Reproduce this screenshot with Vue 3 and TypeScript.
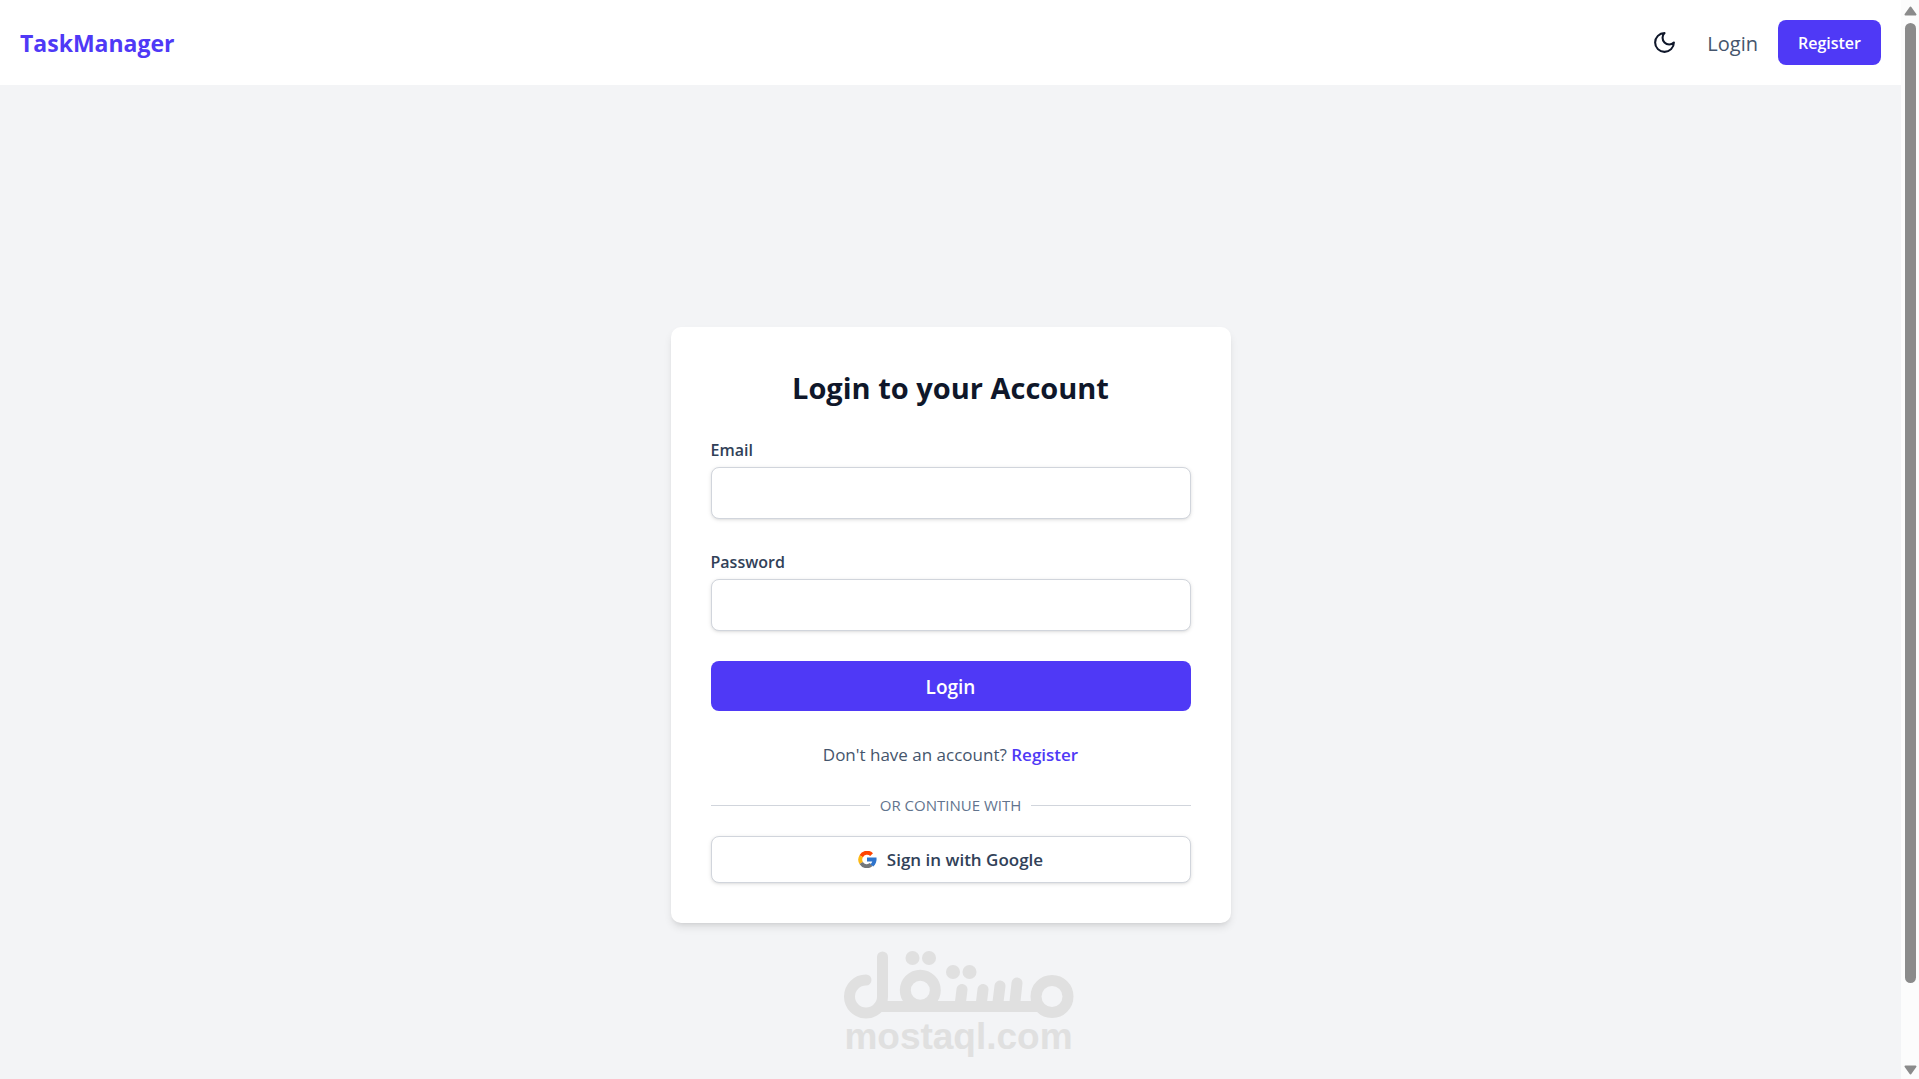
<script setup lang="ts">
import { ref } from 'vue'

const email = ref('')
const password = ref('')
</script>

<template>
  <div class="window">
    <div class="page">
      <header class="bar">
        <a class="brand" href="#">TaskManager</a>
        <nav class="nav">
          <button class="theme" type="button" aria-label="Toggle dark mode">
            <svg viewBox="0 0 24 24" width="25" height="25" fill="none" stroke="currentColor" stroke-width="2" stroke-linecap="round" stroke-linejoin="round" aria-hidden="true">
              <path d="M12 3a6 6 0 0 0 9 9 9 9 0 1 1-9-9Z" />
            </svg>
          </button>
          <a class="nav-link" href="#login">Login</a>
          <a class="nav-button" href="#register">Register</a>
        </nav>
      </header>

      <main class="main">
        <section class="card">
          <h1 class="title">Login to your Account</h1>
          <form class="form" @submit.prevent>
            <div class="field">
              <label for="email">Email</label>
              <input id="email" v-model="email" type="email" />
            </div>
            <div class="field">
              <label for="password">Password</label>
              <input id="password" v-model="password" type="password" />
            </div>
            <button class="submit" type="submit">Login</button>
          </form>
          <p class="signup">Don't have an account? <a href="#register">Register</a></p>
          <div class="divider"><span>OR CONTINUE WITH</span></div>
          <button class="google" type="button">
            <svg viewBox="0 0 19 17" width="19" height="17" fill="none" stroke-width="4" aria-hidden="true">
              <path stroke="#ff4500" d="M3.2 5.2A6.6 6.6 0 0 1 13.6 3.6" />
              <path stroke="#fdb913" d="M3.2 12A6.6 6.6 0 0 1 3.2 5.2" />
              <path stroke="#74777a" d="M13.2 13.6A6.6 6.6 0 0 1 3.2 12" />
              <path fill="#2f74cc" d="M9 6.500h9.500c.5 3.500-.8 7.100-3.200 9.100l-3-2.400c1-.6 1.700-1.500 2-2.600H9z" />
            </svg>
            <span>Sign in with Google</span>
          </button>
        </section>
      </main>

      <div class="watermark">
        <svg viewBox="0 0 230 68" width="230" height="68" fill="none" stroke="currentColor" stroke-width="11" stroke-linecap="round" aria-hidden="true">
          <path d="M22 29A16.500 16.500 0 1 0 38.500 45.500V6" />
          <path d="M36 55.500H198" stroke-linecap="butt" />
          <circle cx="76.300" cy="39.300" r="15" />
          <circle cx="208" cy="45.500" r="16" />
          <path d="M116 55l2-16.500M137 55l2-16.500M153.500 55l2.500-20M170.500 55l2.500-23" />
          <g fill="currentColor" stroke="none">
            <circle cx="68.500" cy="7" r="7" />
            <circle cx="85" cy="7" r="7" />
            <circle cx="109" cy="21" r="7" />
            <circle cx="125.500" cy="21" r="7" />
          </g>
        </svg>
        <span>mostaql.com</span>
      </div>
    </div>

    <div class="scrollbar" aria-hidden="true">
      <svg viewBox="0 0 13 10" width="13" height="10"><path d="M6.500 1.500L11.500 8.500H1.500Z" /></svg>
      <div class="track"><div class="thumb"></div></div>
      <svg viewBox="0 0 13 10" width="13" height="10"><path d="M6.500 8.500L11.500 1.500H1.500Z" /></svg>
    </div>
  </div>
</template>

<style>
body {
  margin: 0;
}
</style>

<style scoped>
* {
  box-sizing: border-box;
}
.window {
  display: flex;
  height: 100vh;
  overflow: hidden;
  font-family: 'Segoe UI', 'Open Sans', 'Noto Sans', sans-serif;
  color: #0f172a;
  background: #f3f4f6;
}
.page {
  position: relative;
  flex: 1;
  min-width: 0;
  overflow: hidden;
}
a {
  color: inherit;
  text-decoration: none;
}
button {
  font-family: inherit;
  cursor: pointer;
}
.bar {
  display: flex;
  align-items: center;
  justify-content: space-between;
  padding: 20px;
  background: #fff;
}
.brand {
  padding-top: 2px;
  font-size: 23px;
  line-height: 35px;
  font-weight: 700;
  color: #4f39f6;
}
.nav {
  display: flex;
  align-items: center;
  gap: 20px;
}
.theme {
  display: flex;
  padding: 10px;
  border: 0;
  background: none;
  color: #0f172a;
}
.nav-link {
  padding-top: 2px;
  font-size: 20px;
  line-height: 30px;
  color: #45556c;
}
.nav-button {
  padding: 11px 20px 9px;
  border-radius: 8px;
  background: #4f39f6;
  color: #fff;
  font-size: 16px;
  line-height: 25px;
  font-weight: 600;
}
.main {
  display: flex;
  align-items: center;
  justify-content: center;
  min-height: 100vh;
}
.card {
  width: 560px;
  padding: 40px;
  border-radius: 10px;
  background: #fff;
  box-shadow: 0 5px 8px -1px rgba(0, 0, 0, 0.1), 0 3px 5px -3px rgba(0, 0, 0, 0.1);
}
.title {
  margin: 0 0 28px;
  font-size: 29px;
  line-height: 42px;
  font-weight: 700;
  text-align: center;
}
.form {
  display: flex;
  flex-direction: column;
  gap: 30px;
}
.field {
  display: flex;
  flex-direction: column;
  gap: 3px;
}
.field label {
  font-size: 16px;
  line-height: 27px;
  font-weight: 600;
  color: #314158;
}
.field input {
  height: 52px;
  padding: 10px 15px;
  border: 1px solid #d1d5dc;
  border-radius: 8px;
  background: #fff;
  box-shadow: 0 1px 4px rgba(0, 0, 0, 0.1), 0 1px 3px -1px rgba(0, 0, 0, 0.1);
  font: inherit;
}
.submit {
  padding: 11px 10px 9px;
  border: 0;
  border-radius: 8px;
  background: #4f39f6;
  color: #fff;
  font-size: 19px;
  line-height: 30px;
  font-weight: 600;
}
.signup {
  margin: 30px 0 27px;
  font-size: 17px;
  line-height: 27px;
  text-align: center;
  color: #45556c;
}
.signup a {
  font-weight: 600;
  color: #4f39f6;
}
.divider {
  display: flex;
  align-items: center;
  gap: 10px;
  margin-bottom: 20px;
  font-size: 15px;
  line-height: 21px;
  color: #62748e;
}
.divider::before,
.divider::after {
  content: '';
  flex: 1;
  height: 1px;
  background: #d1d5dc;
}
.google {
  display: flex;
  align-items: center;
  justify-content: center;
  gap: 10px;
  width: 100%;
  padding: 10px;
  border: 1px solid #d1d5dc;
  border-radius: 8px;
  background: #fff;
  box-shadow: 0 1px 4px rgba(0, 0, 0, 0.1), 0 1px 3px -1px rgba(0, 0, 0, 0.1);
  color: #314158;
  font-size: 17px;
  line-height: 25px;
  font-weight: 600;
}
.watermark {
  position: absolute;
  right: 0;
  bottom: 24px;
  left: 16px;
  display: flex;
  flex-direction: column;
  align-items: center;
  color: #e0e0e0;
  pointer-events: none;
}
.watermark span {
  font-family: 'Liberation Sans', Arial, sans-serif;
  font-size: 37px;
  line-height: 36px;
  font-weight: 700;
}
.scrollbar {
  display: flex;
  flex-direction: column;
  align-items: center;
  width: 18px;
  padding: 6px 0 4px 1px;
  background: #fcfcfc;
}
.scrollbar svg {
  fill: #8b8b8b;
  stroke: #8b8b8b;
  stroke-width: 2;
  stroke-linejoin: round;
}
.track {
  flex: 1;
  width: 11px;
  padding: 7px 0 10px;
}
.thumb {
  height: 93%;
  border-radius: 6px;
  background: #8b8b8b;
}
</style>
